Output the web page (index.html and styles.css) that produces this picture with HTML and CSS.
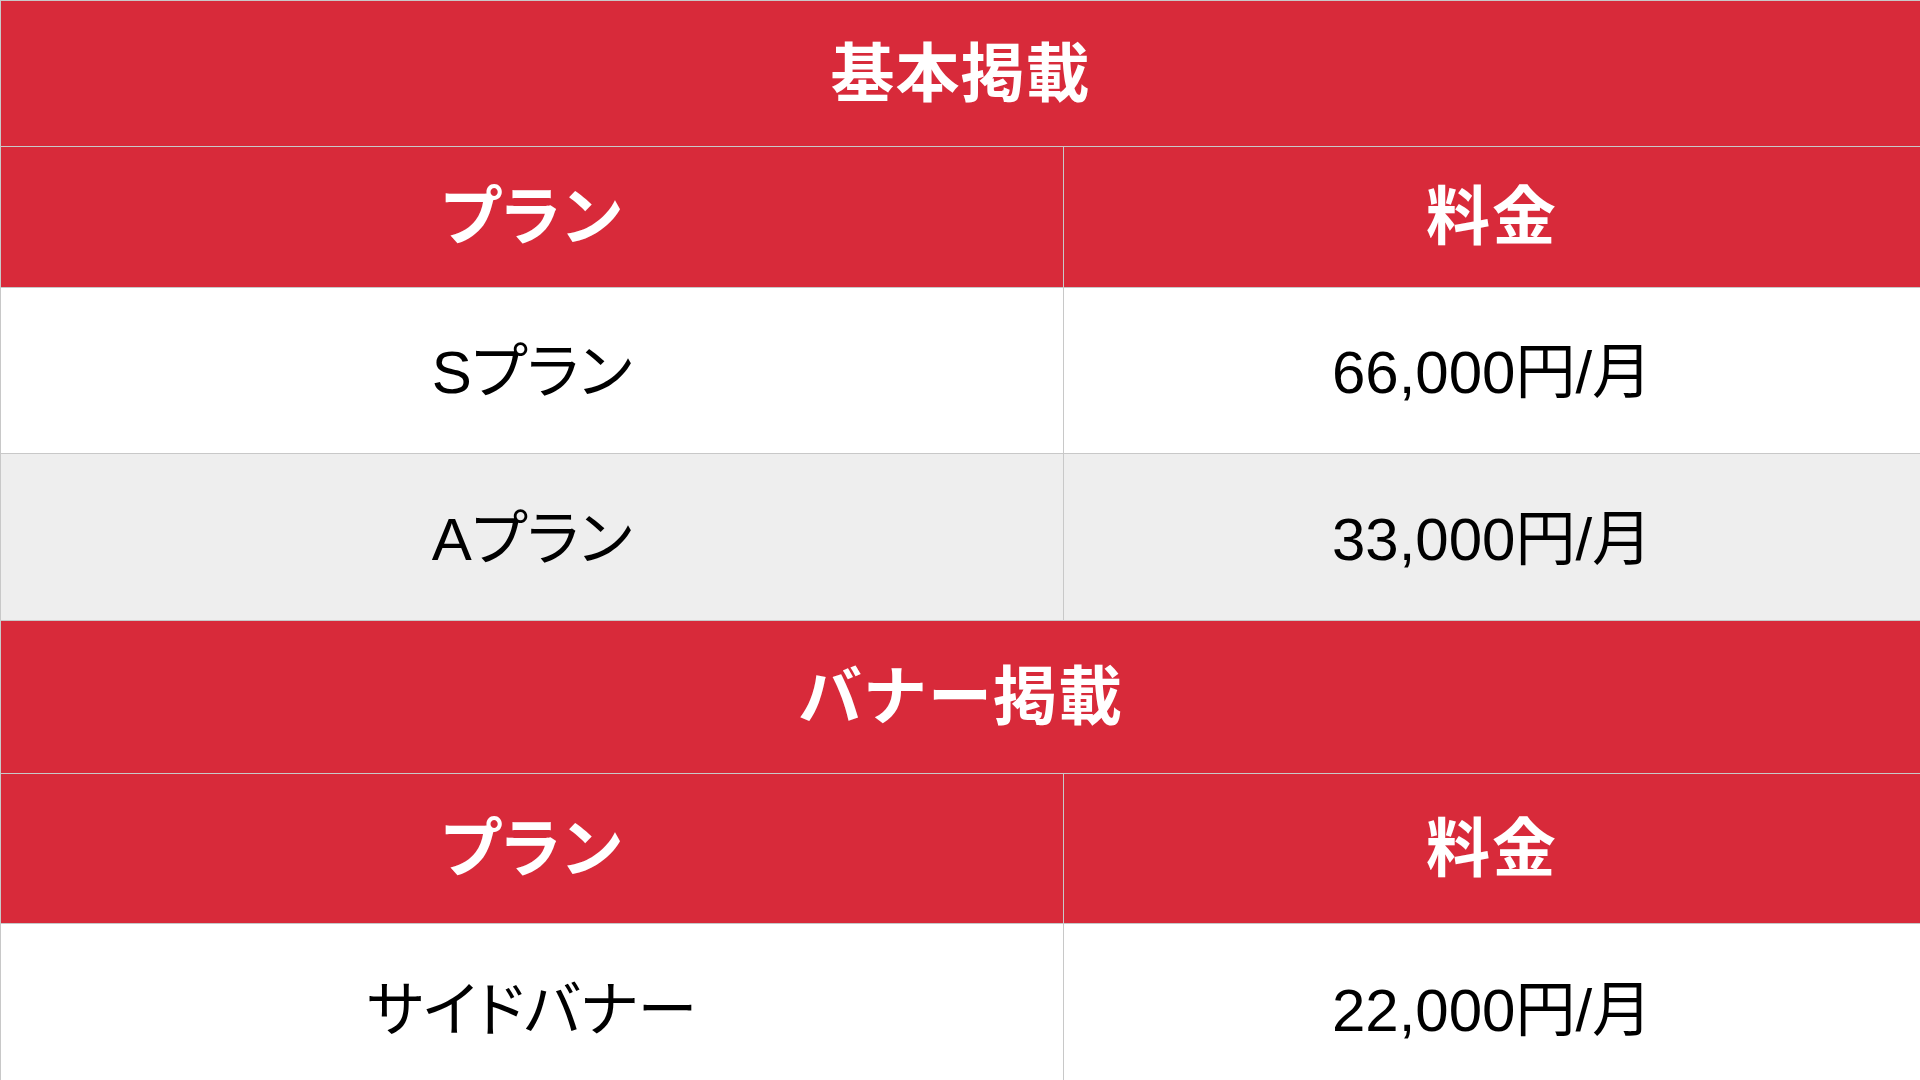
FILE: index.html
```html
<!DOCTYPE html>
<html lang="ja">
<head>
<meta charset="utf-8">
<title>掲載プラン</title>
<link rel="stylesheet" href="styles.css">
</head>
<body>
<table class="price-table">
  <colgroup>
    <col class="col-plan">
    <col class="col-price">
  </colgroup>
  <tbody>
    <tr class="row-title row-title-1"><th colspan="2">基本掲載</th></tr>
    <tr class="row-head row-head-1"><th>プラン</th><th>料金</th></tr>
    <tr class="row-data row-s"><td>Sプラン</td><td>66,000円/月</td></tr>
    <tr class="row-data row-alt row-a"><td>Aプラン</td><td>33,000円/月</td></tr>
    <tr class="row-title row-title-2"><th colspan="2">バナー掲載</th></tr>
    <tr class="row-head row-head-2"><th>プラン</th><th>料金</th></tr>
    <tr class="row-data row-side"><td>サイドバナー</td><td>22,000円/月</td></tr>
  </tbody>
</table>
</body>
</html>
```

FILE: styles.css
```css
html, body {
  margin: 0;
  padding: 0;
  background: #ffffff;
}

body {
  font-family: "Liberation Sans", "Noto Sans CJK JP", sans-serif;
  color: #000;
  overflow: hidden;
}

.price-table {
  width: 1921px;
  border-collapse: collapse;
  table-layout: fixed;
}

.col-plan { width: 1063px; }
.col-price { width: auto; }

.price-table th,
.price-table td {
  border: 1px solid #c8c8c8;
  text-align: center;
  vertical-align: middle;
  padding: 0;
}

.price-table th {
  background: #d82a3a;
  color: #ffffff;
  font-family: "Noto Sans CJK JP", sans-serif;
  font-weight: 700;
  font-size: 64px;
  line-height: 1;
  letter-spacing: 1px;
  padding-bottom: 12px;
}

.row-head th {
  font-feature-settings: "palt" 1;
  letter-spacing: 2px;
}

.price-table td {
  background: #ffffff;
  font-size: 60px;
  line-height: 1;
  font-feature-settings: "palt" 1;
  padding-top: 5px;
}

.row-alt td { background: #eeeeee; }

.row-title-1 { height: 146px; }
.row-head-1 { height: 141px; }
.row-s { height: 166px; }
.row-a { height: 167px; }
.row-title-2 { height: 153px; }
.row-head-2 { height: 150px; }
.row-side { height: 170px; }
```
